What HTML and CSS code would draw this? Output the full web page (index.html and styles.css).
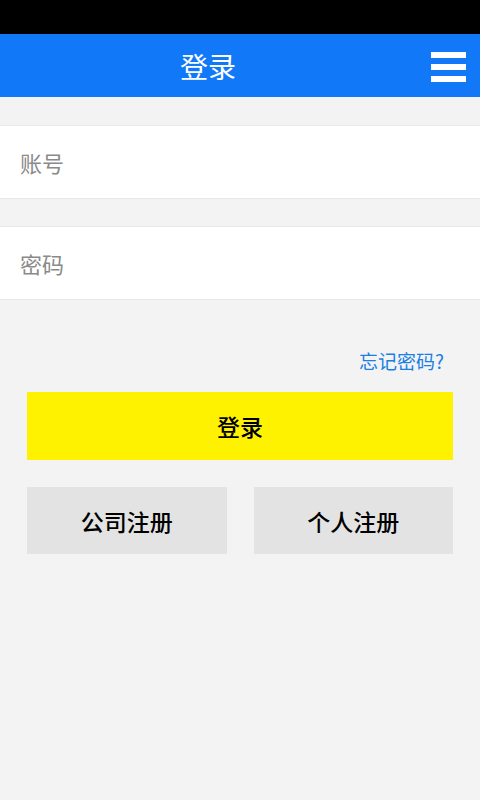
FILE: index.html
```html
<!DOCTYPE html>
<html lang="zh-CN">
<head>
  <meta charset="UTF-8" />
  <title>登录</title>
  <link rel="stylesheet" href="styles.css">
</head>
<body>

<div id="statusbar"></div>

<div id="header">
  <h1>登录</h1>
  <div id="menuBtn">
    <span></span>
    <span></span>
    <span></span>
  </div>
</div>

<div id="main">
  <div class="field"><input type="text" placeholder="账号" /></div>
  <div class="field"><input type="password" placeholder="密码" /></div>

  <div id="forgot"><a href="#">忘记密码?</a></div>

  <button id="loginBtn">登录</button>

  <div id="regRow">
    <button class="reg-btn">公司注册</button>
    <button class="reg-btn">个人注册</button>
  </div>
</div>

</body>
</html>
```

FILE: styles.css
```css
body {
  margin: 0;
  height: 800px;
  background-color: #f3f3f3;
  font-family: "Noto Sans CJK SC", "Noto Sans", sans-serif;
  overflow: hidden;
}

#statusbar {
  height: 34px;
  background-color: #000;
}

#header {
  height: 63px;
  background-color: #1179f8;
  display: flex;
  align-items: center;
}

#header h1 {
  flex-grow: 1;
  margin: 0;
  text-align: center;
  color: white;
  font-size: 28px;
  font-weight: normal;
}

#menuBtn {
  width: 64px;
  display: flex;
  flex-direction: column;
  align-items: center;
  gap: 6px;
  padding-top: 2px;
}

#menuBtn span {
  display: block;
  width: 35px;
  height: 6px;
  background-color: white;
}

#main {
  padding-top: 28px;
}

.field {
  height: 72px;
  background-color: #fff;
  border-top: 1px solid #e8e8e8;
  border-bottom: 1px solid #e8e8e8;
  margin-bottom: 27px;
  display: flex;
  align-items: center;
}

.field input {
  border: none;
  outline: none;
  background: none;
  width: 100%;
  padding: 0 20px;
  font-family: inherit;
  font-size: 22px;
}

.field input::placeholder {
  color: #8a8a8a;
}

#forgot {
  text-align: right;
  padding: 20px 36px 0 0;
  height: 48px;
  box-sizing: border-box;
}

#forgot a {
  color: #1a7fe3;
  text-decoration: none;
  font-size: 19px;
}

#loginBtn {
  display: block;
  margin: 17px 27px 0;
  width: 426px;
  height: 68px;
  border: none;
  background-color: #fff200;
  color: #000;
  font-family: inherit;
  font-size: 23px;
  font-weight: 500;
  cursor: pointer;
}

#regRow {
  display: flex;
  gap: 27px;
  margin: 27px 27px 0;
}

.reg-btn {
  flex: 1;
  height: 67px;
  border: none;
  background-color: #e3e3e3;
  color: #000;
  font-family: inherit;
  font-size: 23px;
  font-weight: 500;
  cursor: pointer;
}
```
